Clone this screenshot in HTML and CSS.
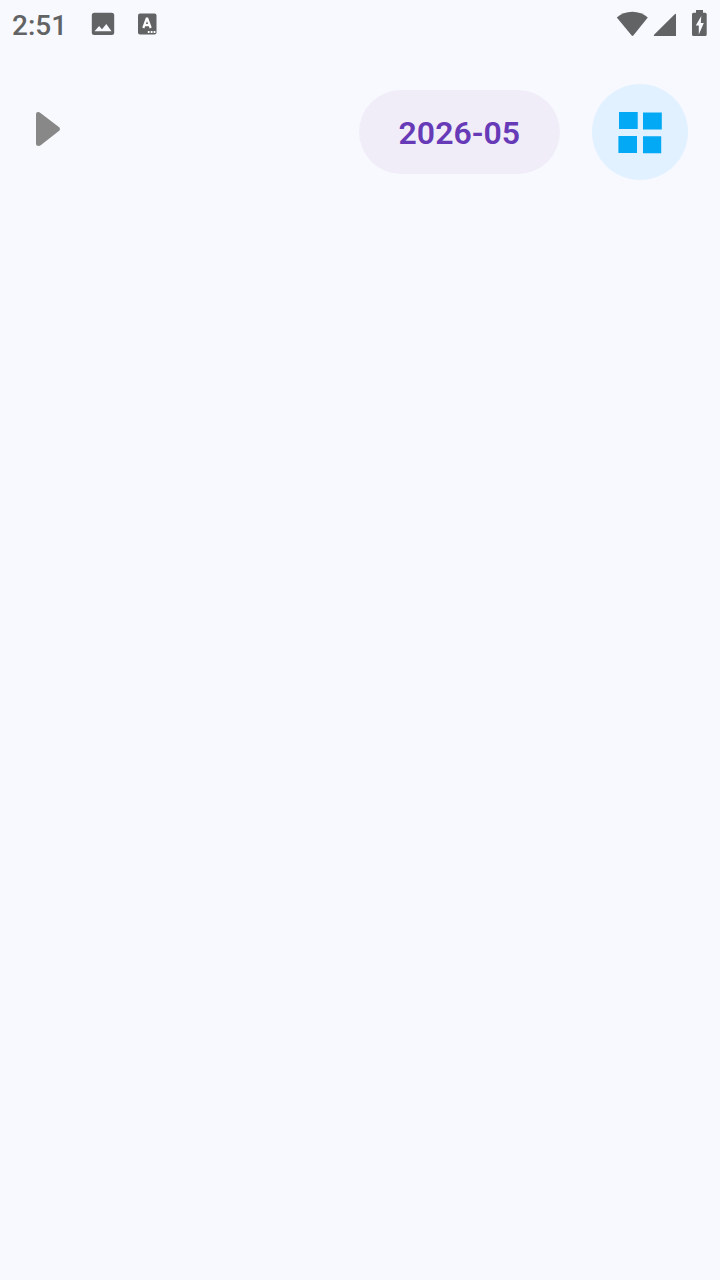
FILE: index.html
```html
<!DOCTYPE html>
<html lang="en">
<head>
<meta charset="UTF-8">
<meta name="viewport" content="width=device-width, initial-scale=1">
<title>Calendar</title>
<link rel="stylesheet" href="styles.css">
</head>
<body>
<div class="status-bar">
  <div class="status-left">
    <span class="clock">2:51</span>
    <svg class="icon-image" width="24" height="24" viewBox="0 0 24 24">
      <path fill="#626364" fill-rule="evenodd" d="M3.300.7h17.400A2.500 2.500 0 0 1 23.200 3.200v17.300a2.500 2.500 0 0 1-2.500 2.500H3.300A2.500 2.500 0 0 1 .8 20.500V3.200A2.500 2.500 0 0 1 3.300.7zM3.500 19.300h17L15.300 12l-4.300 5.300-2.900-3.300z"/>
    </svg>
    <svg class="icon-keyboard" width="20" height="24" viewBox="0 0 20 24">
      <rect x="1" y="1.500" width="18.500" height="21" rx="2" fill="#626364"/>
      <path d="M6.300 16l3.400-9.300h.6l3.400 9.300M8 13.200h4.500" fill="none" stroke="#fff" stroke-width="2.200"/>
      <path d="M10.800 19h1.800v2h-1.800zM13.700 19h1.800v2h-1.800zM16.600 19h1.800v2h-1.800z" fill="#fff"/>
    </svg>
  </div>
  <div class="status-right">
    <svg width="32" height="28" viewBox="0 0 32 28">
      <path fill="#626364" d="M17.300 25.500q-.8.800-1.600 0L.8 7.500C5 4 10 1.800 16.300 1.800S27.500 4 31.800 7.500z"/>
    </svg>
    <svg width="24" height="28" viewBox="0 0 24 28">
      <path fill="#626364" d="M24 5v21H3q-2 0-.7-1.500L22.500 4.500Q24 3 24 5z"/>
    </svg>
    <svg class="icon-battery" width="16" height="28" viewBox="0 0 16 28">
      <path fill="#626364" fill-rule="evenodd" d="M4 0h7v2.700h2.200A1.500 1.500 0 0 1 14.700 4.200v20.300a1.500 1.500 0 0 1-1.500 1.500H1.500A1.500 1.500 0 0 1 0 24.500V4.200a1.500 1.500 0 0 1 1.500-1.500H4zM9.300 6L3.800 15.500h3v9L11.800 13H8.800z"/>
    </svg>
  </div>
</div>
<div class="toolbar">
  <button class="play-btn" type="button" aria-label="Play">
    <svg width="32" height="48" viewBox="0 0 32 48">
      <path fill="#888" d="M4 6q0-2 2-2 1.500 0 2.500 1l19 14.500q1 1.500 0 3L9 37q-1 1-2.500 1Q4 38 4 36z"/>
    </svg>
  </button>
  <div class="actions">
    <button class="month-btn" type="button">2026-05</button>
    <button class="grid-btn" type="button" aria-label="Grid view">
      <svg width="48" height="48" viewBox="0 0 48 48" fill="#03a9f4">
        <path d="M3 4h18.700v17H3zM27 4.400h18.800v17H27zM2.400 28H21v17H2.400zM27 28.300h18.200v17H27z"/>
      </svg>
    </button>
  </div>
</div>
</body>
</html>
```

FILE: styles.css
```css
* {
  margin: 0;
  padding: 0;
  box-sizing: border-box;
}
body {
  min-height: 100vh;
  background: #f8f9ff;
  font-family: Roboto, "Liberation Sans", sans-serif;
}
svg {
  display: block;
}
button {
  border: none;
  background: none;
  font-family: inherit;
  cursor: pointer;
}
.status-bar {
  height: 48px;
  padding: 0 12px;
  display: flex;
  justify-content: space-between;
  align-items: center;
}
.status-left,
.status-right {
  display: flex;
  align-items: center;
}
.clock {
  padding-top: 4px;
  color: #626364;
  font-size: 28px;
  font-weight: 500;
  line-height: 44px;
}
.icon-image {
  margin-left: 24px;
}
.icon-keyboard {
  margin-left: 22px;
}
.status-right {
  gap: 4px;
}
.icon-battery {
  margin-left: 12px;
}
.toolbar {
  padding: 36px 32px;
  display: flex;
  justify-content: space-between;
  align-items: center;
}
.actions {
  display: flex;
  align-items: center;
  gap: 32px;
}
.month-btn {
  height: 84px;
  padding: 2px 40px 0;
  border-radius: 42px;
  background: #f0edf8;
  color: #673ab7;
  font-size: 32px;
  font-weight: 600;
}
.grid-btn {
  width: 96px;
  height: 96px;
  border-radius: 50%;
  background: #e1f1ff;
  display: flex;
  justify-content: center;
  align-items: center;
}
```
